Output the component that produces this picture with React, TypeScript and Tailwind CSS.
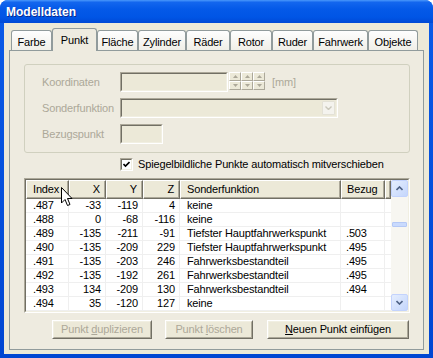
import React from 'react';

type Tab = { label: string; w: string };
const tabs: Tab[] = [
  { label: 'Farbe', w: 'w-[41px]' },
  { label: 'Punkt', w: 'w-[45px]' },
  { label: 'Fläche', w: 'w-[41px]' },
  { label: 'Zylinder', w: 'w-[48px]' },
  { label: 'Räder', w: 'w-[44px]' },
  { label: 'Rotor', w: 'w-[42px]' },
  { label: 'Ruder', w: 'w-[41px]' },
  { label: 'Fahrwerk', w: 'w-[55px]' },
  { label: 'Objekte', w: 'w-[50px]' },
];

const rows: string[][] = [
  ['.487', '-33', '-119', '4', 'keine', ''],
  ['.488', '0', '-68', '-116', 'keine', ''],
  ['.489', '-135', '-211', '-91', 'Tiefster Hauptfahrwerkspunkt', '.503'],
  ['.490', '-135', '-209', '229', 'Tiefster Hauptfahrwerkspunkt', '.495'],
  ['.491', '-135', '-203', '246', 'Fahrwerksbestandteil', '.495'],
  ['.492', '-135', '-192', '261', 'Fahrwerksbestandteil', '.495'],
  ['.493', '134', '-209', '130', 'Fahrwerksbestandteil', '.494'],
  ['.494', '35', '-120', '127', 'keine', ''],
];

function Sunken({ className, children }: { className: string; children?: React.ReactNode }) {
  return (
    <div className={`border border-t-[#ACA899] border-l-[#ACA899] border-b-white border-r-white ${className}`}>
      <div className="flex h-full w-full border border-t-[#716F64] border-l-[#716F64] border-b-[#F1EFE2] border-r-[#F1EFE2] bg-[#ECE9D8]">
        {children}
      </div>
    </div>
  );
}

function Raised({ className, children }: { className: string; children?: React.ReactNode }) {
  return (
    <div className={`border border-t-white border-l-white border-b-[#716F64] border-r-[#716F64] ${className}`}>
      <div className="flex h-full w-full items-center justify-center border border-t-[#F1EFE2] border-l-[#F1EFE2] border-b-[#ACA899] border-r-[#ACA899] bg-[#ECE9D8]">
        {children}
      </div>
    </div>
  );
}

function MiniArrow({ up }: { up: boolean }) {
  return (
    <svg width="5" height="3" viewBox="0 0 5 3">
      {up ? <polygon points="0,3 5,3 2.5,0" fill="#ACA899" /> : <polygon points="0,0 5,0 2.5,3" fill="#ACA899" />}
    </svg>
  );
}

function SpinCol() {
  return (
    <div className="flex w-[12px] flex-col">
      <div className="flex h-[9px] items-center justify-center border border-t-white border-l-white border-b-[#ACA899] border-r-[#ACA899] bg-[#ECE9D8]">
        <MiniArrow up />
      </div>
      <div className="flex h-[9px] items-center justify-center border border-t-white border-l-white border-b-[#ACA899] border-r-[#ACA899] bg-[#ECE9D8]">
        <MiniArrow up={false} />
      </div>
    </div>
  );
}

function ScrollBtn({ up }: { up: boolean }) {
  return (
    <div className="flex h-[17px] w-[17px] items-center justify-center rounded-[2px] border border-[#C3D3FD] bg-[linear-gradient(135deg,#E5EEFE,#C4D6FC)]">
      <svg width="7" height="5" viewBox="0 0 7 5">
        {up ? (
          <polyline points="0.5,4 3.5,1 6.5,4" fill="none" stroke="#4D6185" strokeWidth="1.6" />
        ) : (
          <polyline points="0.5,1 3.5,4 6.5,1" fill="none" stroke="#4D6185" strokeWidth="1.6" />
        )}
      </svg>
    </div>
  );
}

const headerCell =
  'flex h-full items-center border-t border-l border-t-white border-l-white border-r border-b border-r-[#716F64] border-b-[#716F64] shadow-[inset_-1px_-1px_0_#ACA899] bg-[#ECE9D8]';

export default function App() {
  return (
    <div className="relative h-[358px] w-[433px] bg-white font-['Liberation_Sans',Arial,sans-serif] text-[11px] leading-none tracking-[-0.15px] text-black select-none">
      <div className="flex h-full flex-col overflow-hidden rounded-t-[8px] bg-[linear-gradient(to_bottom,#0A5BE8,#0046D2)]">
        {/* title bar */}
        <div className="flex h-[23px] items-center pl-[6px] bg-[linear-gradient(to_bottom,#4A98FB_0%,#1366EE_10%,#0459E8_40%,#0055E5_75%,#0049D5_100%)]">
          <span className="text-[12px] font-bold tracking-normal text-white [text-shadow:1px_1px_0_#0A2A90]">Modelldaten</span>
        </div>

        {/* body */}
        <div className="mx-[4px] mb-[4px] flex flex-1 flex-col bg-[#ECE9D8] pl-[5px] pt-[5px]">
          {/* tabs */}
          <div className="flex h-[22px] items-end pl-[2px]">
            {tabs.map((t) =>
              t.label === 'Punkt' ? (
                <div
                  key={t.label}
                  className={`relative z-10 -mb-px flex h-[23px] ${t.w} items-start justify-center rounded-t-[3px] border border-b-0 border-[#919B9C] bg-[#EEEBE0] pt-[6px]`}
                >
                  {t.label}
                </div>
              ) : (
                <div
                  key={t.label}
                  className={`flex h-[20px] ${t.w} items-start justify-center rounded-t-[3px] border border-b-0 border-[#919B9C] bg-[linear-gradient(to_bottom,#FEFEFE,#F0EFE8)] pt-[6px]`}
                >
                  {t.label}
                </div>
              ),
            )}
          </div>

          {/* panel */}
          <div className="flex h-[300px] w-[415px] flex-col border border-[#919B9C] bg-[#EEEBE0] pl-[14px] pt-[13px]">
            {/* group box */}
            <div className="flex h-[89px] w-[386px] flex-col gap-[6px] rounded-[3px] border border-[#D0D0BF] pl-[17px] pt-[7px]">
              <div className="flex h-[20px] items-center">
                <span className="w-[78px] text-[#ACA899]">Koordinaten</span>
                <Sunken className="h-[20px] w-[108px]" />
                <div className="ml-[1px] flex self-start">
                  <SpinCol />
                  <SpinCol />
                  <SpinCol />
                </div>
                <span className="ml-[7px] text-[#ACA899]">[mm]</span>
              </div>
              <div className="flex h-[20px] items-center">
                <span className="w-[78px] text-[#ACA899]">Sonderfunktion</span>
                <Sunken className="h-[20px] w-[218px]">
                  <div className="flex flex-1 justify-end p-px">
                    <div className="flex w-[13px] items-center justify-center rounded-[1px] border border-[#E3E1D6] bg-[#F4F3EE]">
                      <svg width="7" height="4" viewBox="0 0 7 4">
                        <polyline points="0.5,0.5 3.5,3.5 6.5,0.5" fill="none" stroke="#C9C7BA" strokeWidth="1.4" />
                      </svg>
                    </div>
                  </div>
                </Sunken>
              </div>
              <div className="flex h-[20px] items-center">
                <span className="w-[78px] text-[#ACA899]">Bezugspunkt</span>
                <Sunken className="h-[20px] w-[43px]" />
              </div>
            </div>

            {/* checkbox */}
            <div className="mt-[5px] flex h-[13px] items-center pl-[96px]">
              <div className="h-[13px] w-[13px] border border-t-[#ACA899] border-l-[#ACA899] border-b-white border-r-white">
                <div className="flex h-full w-full items-center justify-center border border-t-[#716F64] border-l-[#716F64] border-b-[#F1EFE2] border-r-[#F1EFE2] bg-white">
                  <svg width="7" height="7" viewBox="0 0 7 7">
                    <polyline points="0.5,3 2.5,5 6.5,1" fill="none" stroke="#000" strokeWidth="1.6" />
                  </svg>
                </div>
              </div>
              <span className="ml-[5px]">Spiegelbildliche Punkte automatisch mitverschieben</span>
            </div>

            {/* list view */}
            <div className="mt-[7px] h-[135px] w-[386px] border border-t-[#ACA899] border-l-[#ACA899] border-b-white border-r-white">
              <div className="flex h-full w-full border border-t-[#716F64] border-l-[#716F64] border-b-[#F1EFE2] border-r-[#F1EFE2] bg-white">
                <div className="flex flex-1 flex-col">
                  <div className="flex h-[19px]">
                    <div className={`${headerCell} w-[43px] pl-[6px]`}>Index</div>
                    <div className={`${headerCell} w-[37px] justify-end pr-[5px]`}>X</div>
                    <div className={`${headerCell} w-[37px] justify-end pr-[5px]`}>Y</div>
                    <div className={`${headerCell} w-[37px] justify-end pr-[5px]`}>Z</div>
                    <div className={`${headerCell} w-[161px] pl-[6px]`}>Sonderfunktion</div>
                    <div className={`${headerCell} w-[44px] pl-[5px]`}>Bezug</div>
                    <div className={`${headerCell} flex-1`} />
                  </div>
                  {rows.map((r) => (
                    <div key={r[0]} className="flex h-[14px]">
                      <div className="flex w-[43px] items-center border-r border-b border-[#EFEFEF] pl-[7px]">{r[0]}</div>
                      <div className="flex w-[37px] items-center justify-end border-r border-b border-[#EFEFEF] pr-[4px]">{r[1]}</div>
                      <div className="flex w-[37px] items-center justify-end border-r border-b border-[#EFEFEF] pr-[4px]">{r[2]}</div>
                      <div className="flex w-[37px] items-center justify-end border-r border-b border-[#EFEFEF] pr-[4px]">{r[3]}</div>
                      <div className="flex w-[161px] items-center border-r border-b border-[#EFEFEF] pl-[7px] whitespace-nowrap">{r[4]}</div>
                      <div className="flex w-[44px] items-center border-r border-b border-[#EFEFEF] pl-[5px]">{r[5]}</div>
                      <div className="flex-1 border-b border-[#EFEFEF]" />
                    </div>
                  ))}
                </div>
                {/* scrollbar */}
                <div className="flex w-[17px] flex-col bg-[#F7F6F1]">
                  <ScrollBtn up />
                  <div className="flex flex-1 flex-col pt-[25px]">
                    <div className="mx-[1px] h-[5px] rounded-[1px] border border-[#B4C8F6] bg-[#C9DAFD]" />
                  </div>
                  <ScrollBtn up={false} />
                </div>
              </div>
            </div>

            {/* buttons */}
            <div className="mt-[7px] flex pl-[28px]">
              <Raised className="h-[19px] w-[100px]">
                <span className="text-[#ACA899]">
                  Punkt <u>d</u>uplizieren
                </span>
              </Raised>
              <Raised className="ml-[13px] h-[19px] w-[88px]">
                <span className="text-[#ACA899]">
                  Punkt <u>l</u>öschen
                </span>
              </Raised>
              <Raised className="ml-[14px] h-[19px] w-[142px]">
                <span>
                  <u>N</u>euen Punkt einfügen
                </span>
              </Raised>
            </div>
          </div>
        </div>
      </div>

      {/* mouse cursor */}
      <svg className="absolute left-[61px] top-[187px]" width="12" height="20" viewBox="0 0 12 20">
        <polygon points="0.5,0.5 0.5,16 4,12.5 6.5,18.5 9,17.5 6.5,11.5 11,11.5" fill="#fff" stroke="#000" strokeWidth="1" />
      </svg>
    </div>
  );
}
